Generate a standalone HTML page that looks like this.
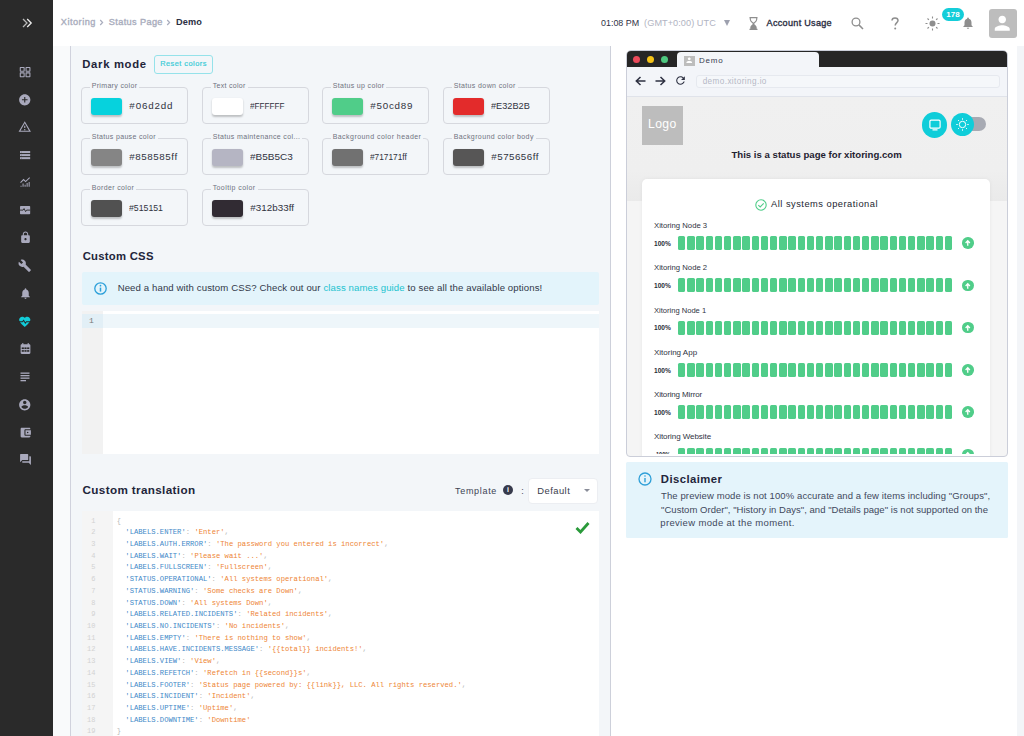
<!DOCTYPE html>
<html><head><meta charset="utf-8">
<style>
*{box-sizing:border-box;margin:0;padding:0}
html,body{width:1024px;height:736px;overflow:hidden;background:#fff;font-family:"Liberation Sans",sans-serif;color:#2b2e42}
.a{position:absolute}
.t{position:absolute;white-space:nowrap}
#sb{left:0;top:0;width:53px;height:736px;background:#2a2a2a}
#lp{left:69.5px;top:46px;width:541.5px;height:690px;background:#f3f6f9;border-left:1.5px solid #d0d2dd;border-right:1px solid #cdd0da}
#lstrip{left:53px;top:46px;width:17px;height:690px;background:#f9fafb}
#rstrip{left:1017px;top:46px;width:8px;height:690px;background:#f3f5f8}
.fld{position:absolute;width:106.5px;height:37.3px;border:1px solid #d6d8de;border-radius:4px}
.fld .sw{position:absolute;left:8.8px;top:9.7px;width:31.2px;height:17.2px;border-radius:3px;box-shadow:0 1.5px 2px rgba(0,0,0,.22)}
#ed2{left:82px;top:511px;width:517px;height:225px;background:#fff}
#gut2{position:absolute;left:0;top:0;width:31px;height:225px;background:#f5f5f5}
#gut2 pre{position:absolute;right:17.5px;top:4.5px;text-align:right;font-family:"Liberation Mono",monospace;font-size:7px;line-height:11.72px;color:#d2d2d2}
#code2{position:absolute;left:34.7px;top:4.5px;font-family:"Liberation Mono",monospace;font-size:7.2px;line-height:11.72px;color:#999}
#code2 .k{color:#4189c8}
#code2 .v{color:#ee8535}
#code2 .p{color:#b9b9b9}
#win{left:625.5px;top:50px;width:382.5px;height:406.5px;border:1px solid #cbced9;border-radius:5px 5px 4px 4px;overflow:hidden;background:#f5f5f5}
#tbar{left:0;top:0;width:100%;height:15.5px;background:#262626}
.dot{position:absolute;top:5.2px;width:7.2px;height:7.2px;border-radius:50%}
#tab{left:50.5px;top:1.3px;width:142px;height:15px;background:#f3f5f9;border-radius:4px 4px 0 0}
#nav{left:0;top:15.5px;width:100%;height:30px;background:#f3f5f9;border-bottom:1px solid #e0e3ea}
#url{left:69px;top:8.3px;width:304px;height:13.5px;border:1px solid #e6e9ef;border-radius:3px;background:#f5f7fa}
#phdr{left:0;top:45.5px;width:100%;height:104px;background:linear-gradient(#f0f0f0 0%,#efefef 70%,#eaeaea 100%)}
#card{left:15.5px;top:128px;width:348px;height:300px;background:#fff;border-radius:5px;box-shadow:0 0 4px rgba(0,0,0,.06)}
#clip{left:0;top:0;width:1024px;height:736px;clip-path:inset(96px 17px 282px 626.5px)}
.bars{position:absolute;width:274px;height:14px}
.bars i{position:absolute;top:0;width:7.4px;height:14px;background:#50cd89;border-radius:1.5px}
.up{position:absolute;width:11.5px;height:11.5px;border-radius:50%;background:#50cd89}
.up svg{position:absolute;left:0;top:0}
#disc{left:625.5px;top:462px;width:382.5px;height:76px;background:#e4f4fb;border-radius:1.5px}
</style></head><body>
<div id="sb" class="a"></div>
<div id="lstrip" class="a"></div>
<div id="lp" class="a"></div>
<div id="rstrip" class="a"></div>
<svg class="a" style="left:21.5px;top:18px" width="11" height="10" viewBox="0 0 11 10"><path d="M1 1 L5 5 L1 9" fill="none" stroke="#b8b8b8" stroke-width="1.3"/><path d="M5.2 1 L9.2 5 L5.2 9" fill="none" stroke="#f0f0f0" stroke-width="1.3"/></svg>
<svg class="a" style="left:18.7px;top:65.5px" width="12.2" height="12.2" viewBox="0 0 24 24"><g fill="none" stroke="#a9a9bc" stroke-width="2.1"><rect x="2.5" y="3" width="7.6" height="7.4" rx="0.4"/><rect x="13.9" y="3" width="7.6" height="7.4" rx="0.4"/><rect x="2.5" y="13.6" width="7.6" height="7.4" rx="0.4"/><rect x="13.9" y="13.6" width="7.6" height="7.4" rx="0.4"/></g></svg>
<svg class="a" style="left:18px;top:92.7px" width="13.5" height="13.5" viewBox="0 0 24 24"><path fill="#a9a9bc" d="M12 2C6.48 2 2 6.48 2 12s4.48 10 10 10 10-4.48 10-10S17.52 2 12 2zm5 11h-4v4h-2v-4H7v-2h4V7h2v4h4v2z"/></svg>
<svg class="a" style="left:18px;top:120.2px" width="13.5" height="13.5" viewBox="0 0 24 24"><path fill="#a9a9bc" d="M12 5.99L19.53 19H4.47L12 5.99M12 2L1 21h22L12 2zm1 14h-2v2h2v-2zm0-6h-2v4h2v-4z"/></svg>
<svg class="a" style="left:18.7px;top:148.6px" width="12.2" height="12.2" viewBox="0 0 24 24"><g fill="#a9a9bc"><rect x="2" y="4" width="20" height="4"/><rect x="2" y="10" width="20" height="4"/><rect x="2" y="16" width="20" height="4"/></g><g fill="#272727"><rect x="4" y="5.5" width="1" height="1"/><rect x="4" y="11.5" width="1" height="1"/><rect x="4" y="17.5" width="1" height="1"/></g></svg>
<svg class="a" style="left:18.7px;top:176.4px" width="12.2" height="12.2" viewBox="0 0 24 24"><g fill="none" stroke="#a9a9bc" stroke-width="2"><path d="M3 13 L9 7 L13 11 L21 3"/><path d="M4 21v-2M8 21v-6M12 21v-4M16 21v-7M20 21v-9"/></g></svg>
<svg class="a" style="left:18.7px;top:204.1px" width="12.2" height="12.2" viewBox="0 0 24 24"><rect x="2" y="4" width="20" height="16" rx="1.5" fill="#a9a9bc"/><path d="M2 12 H8 L10 9 L13 15 L15 12 H22" fill="none" stroke="#272727" stroke-width="1.8"/></svg>
<svg class="a" style="left:18.7px;top:230.8px" width="13" height="13" viewBox="0 0 24 24"><path fill="#a9a9bc" d="M18 8h-1V6c0-2.76-2.24-5-5-5S7 3.240 7 6v2H6c-1.1 0-2 .9-2 2v10c0 1.1.9 2 2 2h12c1.1 0 2-.9 2-2V10c0-1.1-.9-2-2-2zm-6 9c-1.1 0-2-.9-2-2s.9-2 2-2 2 .9 2 2-.9 2-2 2zm3.1-9H8.9V6c0-1.71 1.39-3.1 3.1-3.1 1.71 0 3.1 1.39 3.1 3.1v2z"/></svg>
<svg class="a" style="left:17.8px;top:259.1px" width="13.5" height="13.5" viewBox="0 0 24 24"><path fill="#a9a9bc" d="M22.7 19l-9.1-9.1c.9-2.3.4-5-1.5-6.9-2-2-5-2.4-7.4-1.3L9 6 6 9 1.6 4.7C.4 7.1.9 10.1 2.9 12.1c1.9 1.9 4.600 2.4 6.9 1.5l9.1 9.1c.4.4 1 .4 1.4 0l2.3-2.3c.5-.4.5-1.1.1-1.4z"/></svg>
<svg class="a" style="left:18.7px;top:287.1px" width="13" height="13" viewBox="0 0 24 24"><path fill="#a9a9bc" d="M12 22c1.1 0 2-.9 2-2h-4c0 1.1.89 2 2 2zm6-6v-5c0-3.07-1.64-5.64-4.5-6.32V4c0-.83-.67-1.5-1.5-1.5s-1.5.67-1.5 1.5v.68C7.63 5.36 6 7.92 6 11v5l-2 2v1h16v-1l-2-2z"/></svg>
<svg class="a" style="left:18px;top:314.6px" width="13.5" height="13.5" viewBox="0 0 24 24"><path fill="#12ccd8" d="M12 21.35l-1.45-1.32C5.4 15.36 2 12.28 2 8.5 2 5.42 4.42 3 7.5 3c1.74 0 3.41.81 4.5 2.09C13.09 3.81 14.76 3 16.5 3 19.58 3 22 5.420 22 8.5c0 3.78-3.4 6.86-8.55 11.54L12 21.35z"/><path d="M1 12 H8 L10 9.5 L13 14.5 L15 12 H23" fill="none" stroke="#272727" stroke-width="1.8"/></svg>
<svg class="a" style="left:18.7px;top:342.2px" width="13" height="13" viewBox="0 0 24 24"><path fill="#a9a9bc" d="M19 4h-1V2h-2v2H8V2H6v2H5c-1.1 0-2 .9-2 2v14c0 1.1.9 2 2 2h14c1.1 0 2-.9 2-2V6c0-1.1-.9-2-2-2z"/><g fill="#272727"><rect x="5" y="10" width="4" height="3"/><rect x="10" y="10" width="4" height="3"/><rect x="15" y="10" width="4" height="3"/><rect x="5" y="15" width="4" height="3"/><rect x="10" y="15" width="4" height="3"/><rect x="15" y="15" width="4" height="3"/></g></svg>
<svg class="a" style="left:18.7px;top:370.5px" width="12" height="12" viewBox="0 0 24 24"><g fill="#a9a9bc"><rect x="3" y="3" width="18" height="2.6"/><rect x="3" y="8" width="18" height="2.6"/><rect x="3" y="13" width="18" height="2.6"/><rect x="3" y="18" width="11" height="2.6"/></g></svg>
<svg class="a" style="left:18px;top:397.6px" width="13.5" height="13.5" viewBox="0 0 24 24"><path fill="#a9a9bc" d="M12 2C6.48 2 2 6.48 2 12s4.48 10 10 10 10-4.48 10-10S17.52 2 12 2zm0 3c1.66 0 3 1.34 3 3s-1.34 3-3 3-3-1.34-3-3 1.34-3 3-3zm0 14.2c-2.5 0-4.71-1.28-6-3.22.03-1.99 4-3.08 6-3.08 1.99 0 5.970 1.09 6 3.08-1.29 1.94-3.5 3.22-6 3.22z"/></svg>
<svg class="a" style="left:18.7px;top:425.5px" width="13" height="13" viewBox="0 0 24 24"><path fill="#a9a9bc" d="M21 18v1c0 1.1-.9 2-2 2H5c-1.11 0-2-.9-2-2V5c0-1.1.89-2 2-2h14c1.1 0 2 .9 2 2v1h-9c-1.11 0-2 .9-2 2v8c0 1.1.89 2 2 2h9zm-9-2h10V8H12v8zm4-2.5c-.83 0-1.5-.67-1.5-1.5s.67-1.5 1.5-1.5 1.5.67 1.5 1.5-.67 1.5-1.5 1.5z"/></svg>
<svg class="a" style="left:18.7px;top:453.0px" width="13" height="13" viewBox="0 0 24 24"><path fill="#a9a9bc" d="M21 6h-2v9H6v2c0 .55.45 1 1 1h11l4 4V7c0-.55-.45-1-1-1zm-4 6V3c0-.55-.45-1-1-1H3c-.55 0-1 .45-1 1v14l4-4h10c.55 0 1-.45 1-1z"/></svg>
<!-- header -->
<div id="bc1" class="t" style="left:60.82px;top:15.41px;font-size:9.2px;line-height:14px;color:#a9adbd;-webkit-text-stroke:0.35px #a9adbd;letter-spacing:0.486px;"><span>Xitoring</span></div>
<svg class="a" style="left:99px;top:19px" width="5" height="7" viewBox="0 0 5 7"><path d="M1.2 1 L3.6 3.5 L1.2 6" fill="none" stroke="#a9adbd" stroke-width="1.2"/></svg>
<div id="bc2" class="t" style="left:108.82px;top:15.41px;font-size:9.2px;line-height:14px;color:#a9adbd;-webkit-text-stroke:0.35px #a9adbd;letter-spacing:0.360px;"><span>Status Page</span></div>
<svg class="a" style="left:166.3px;top:19px" width="5" height="7" viewBox="0 0 5 7"><path d="M1.2 1 L3.6 3.5 L1.2 6" fill="none" stroke="#a9adbd" stroke-width="1.2"/></svg>
<div id="bc3" class="t" style="left:176.08px;top:15.41px;font-size:9.2px;line-height:14px;color:#2c2f43;font-weight:bold;letter-spacing:0.100px;"><span>Demo</span></div>
<div id="tm1" class="t" style="left:601.46px;top:15.91px;font-size:9.2px;line-height:14px;color:#2f3246;transform:scaleX(0.9698);transform-origin:0 0;"><span>01:08 PM</span></div><div id="tm2" class="t" style="left:644.10px;top:15.91px;font-size:9.2px;line-height:14px;color:#b1b4c2;letter-spacing:0.038px;"><span>(GMT+0:00) UTC</span></div>
<div class="a" style="left:724px;top:20px;width:0;height:0;border-left:3.6px solid transparent;border-right:3.6px solid transparent;border-top:6px solid #9da0ae"></div>
<svg class="a" style="left:749px;top:16.5px" width="9" height="13" viewBox="0 0 9 13"><path d="M0.5 0.7 H8.5 M0.5 12.3 H8.5" stroke="#8e8e8e" stroke-width="1.3"/><path d="M1.3 1 V2.5 C1.3 4.5 3.5 5.5 4.5 6.5 C5.5 5.5 7.7 4.5 7.7 2.5 V1" fill="none" stroke="#8e8e8e" stroke-width="1.1"/><path d="M1.3 12 V10.5 C1.3 8.5 3.5 7.5 4.5 6.5 C5.5 7.5 7.7 8.5 7.7 10.5 V12 Z" fill="#8e8e8e"/></svg>
<div id="acc" class="t" style="left:766.62px;top:15.65px;font-size:9.1px;line-height:14px;color:#2b2e42;-webkit-text-stroke:0.35px #2b2e42;letter-spacing:0.283px;"><span>Account Usage</span></div>
<svg class="a" style="left:850.5px;top:17px" width="13" height="13" viewBox="0 0 13 13"><circle cx="5" cy="5" r="3.9" fill="none" stroke="#8e8e8e" stroke-width="1.3"/><path d="M7.9 7.9 L12 12" stroke="#8e8e8e" stroke-width="1.5"/></svg>
<svg class="a" style="left:891px;top:17px" width="8" height="13" viewBox="0 0 8 13"><path d="M1 3.6 C1 1.9 2.3 0.9 4 0.9 C5.8 0.9 7 2 7 3.6 C7 5.6 4.2 5.8 4.2 8.6" fill="none" stroke="#8e8e8e" stroke-width="1.5"/><circle cx="4.2" cy="11.6" r="1" fill="#8e8e8e"/></svg>
<svg class="a" style="left:924.5px;top:15.5px" width="15" height="15" viewBox="0 0 15 15"><circle cx="7.5" cy="7.5" r="3" fill="#8e8e8e"/><g stroke="#8e8e8e" stroke-width="1.1"><path d="M7.5 0.5v2M7.5 12.5v2M0.5 7.5h2M12.5 7.5h2M2.5 2.5l1.4 1.4M11.1 11.1l1.4 1.4M2.5 12.5l1.4-1.4M11.1 3.9l1.4-1.4"/></g></svg>
<svg class="a" style="left:960.5px;top:16px" width="14" height="14" viewBox="0 0 24 24"><path fill="#8e8e8e" d="M12 22c1.1 0 2-.9 2-2h-4c0 1.1.89 2 2 2zm6-6v-5c0-3.07-1.64-5.64-4.5-6.32V4c0-.83-.67-1.5-1.5-1.5s-1.5.67-1.5 1.5v.68C7.63 5.36 6 7.92 6 11v5l-2 2v1h16v-1l-2-2z"/></svg>
<div class="a" style="left:942px;top:8px;width:22px;height:13px;border-radius:7px;background:#14cdd9;color:#fff;font-size:8px;line-height:13px;text-align:center;font-weight:bold">178</div>
<div class="a" style="left:988.5px;top:9px;width:28.5px;height:28.7px;border-radius:3px;background:#bdbdbd"></div>
<svg class="a" style="left:990.9px;top:12.3px" width="22.5" height="22.5" viewBox="0 0 24 24"><path fill="#fff" d="M12 12c2.21 0 4-1.79 4-4s-1.79-4-4-4-4 1.79-4 4 1.79 4 4 4zm0 2c-2.67 0-8 1.34-8 4v2h16v-2c0-2.66-5.33-4-8-4z"/></svg>

<!-- left panel -->
<div id="dm" class="t" style="left:82.28px;top:57.18px;font-size:11.3px;line-height:14px;color:#22253a;font-weight:bold;letter-spacing:0.675px;"><span>Dark mode</span></div>
<div class="a" style="left:153.6px;top:55px;width:59.6px;height:18.5px;border:1px solid #95e2ea;border-radius:3px"></div>
<div id="rc" class="t" style="left:160.28px;top:57.04px;font-size:7.4px;line-height:14px;color:#38cbd6;-webkit-text-stroke:0.2px #38cbd6;letter-spacing:0.455px;"><span>Reset colors</span></div>
<div class="fld" style="left:81.4px;top:87px"><div class="sw" style="background:#06d2dd"></div></div>
<div class="fld" style="left:202.4px;top:87px"><div class="sw" style="background:#ffffff"></div></div>
<div class="fld" style="left:322.4px;top:87px"><div class="sw" style="background:#50cd89"></div></div>
<div class="fld" style="left:443.4px;top:87px"><div class="sw" style="background:#e32b2b"></div></div>
<div class="fld" style="left:81.4px;top:138px"><div class="sw" style="background:#858585"></div></div>
<div class="fld" style="left:202.4px;top:138px"><div class="sw" style="background:#b5b5c3"></div></div>
<div class="fld" style="left:322.4px;top:138px"><div class="sw" style="background:#717171"></div></div>
<div class="fld" style="left:443.4px;top:138px"><div class="sw" style="background:#575656"></div></div>
<div class="fld" style="left:81.4px;top:189px"><div class="sw" style="background:#515151"></div></div>
<div class="fld" style="left:202.4px;top:189px"><div class="sw" style="background:#312b33"></div></div>
<div id="fl0" class="t" style="left:91.64px;top:78.77px;font-size:7.0px;line-height:14px;color:#6f7280;letter-spacing:0.342px;background:#f3f6f9;padding:0 2px;margin-left:-2px;"><span>Primary color</span></div>
<div id="fh0" class="t" style="left:129.36px;top:99.00px;font-size:9.8px;line-height:14px;color:#30333e;letter-spacing:0.833px;"><span>#06d2dd</span></div>
<div id="fl1" class="t" style="left:212.64px;top:78.77px;font-size:7.0px;line-height:14px;color:#6f7280;letter-spacing:0.311px;background:#f3f6f9;padding:0 2px;margin-left:-2px;"><span>Text color</span></div>
<div id="fh1" class="t" style="left:250.36px;top:99.00px;font-size:9.8px;line-height:14px;color:#30333e;transform:scaleX(0.8333);transform-origin:0 0;"><span>#FFFFFF</span></div>
<div id="fl2" class="t" style="left:332.64px;top:78.77px;font-size:7.0px;line-height:14px;color:#6f7280;letter-spacing:0.343px;background:#f3f6f9;padding:0 2px;margin-left:-2px;"><span>Status up color</span></div>
<div id="fh2" class="t" style="left:370.36px;top:99.00px;font-size:9.8px;line-height:14px;color:#30333e;letter-spacing:0.750px;"><span>#50cd89</span></div>
<div id="fl3" class="t" style="left:453.64px;top:78.77px;font-size:7.0px;line-height:14px;color:#6f7280;letter-spacing:0.381px;background:#f3f6f9;padding:0 2px;margin-left:-2px;"><span>Status down color</span></div>
<div id="fh3" class="t" style="left:491.36px;top:99.00px;font-size:9.8px;line-height:14px;color:#30333e;transform:scaleX(0.9388);transform-origin:0 0;"><span>#E32B2B</span></div>
<div id="fl4" class="t" style="left:91.64px;top:129.77px;font-size:7.0px;line-height:14px;color:#6f7280;letter-spacing:0.353px;background:#f3f6f9;padding:0 2px;margin-left:-2px;"><span>Status pause color</span></div>
<div id="fh4" class="t" style="left:129.36px;top:150.00px;font-size:9.8px;line-height:14px;color:#30333e;letter-spacing:0.550px;"><span>#858585ff</span></div>
<div id="fl5" class="t" style="left:212.64px;top:129.77px;font-size:7.0px;line-height:14px;color:#6f7280;letter-spacing:0.363px;background:#f3f6f9;padding:0 2px;margin-left:-2px;"><span>Status maintenance col...</span></div>
<div id="fh5" class="t" style="left:250.36px;top:150.00px;font-size:9.8px;line-height:14px;color:#30333e;transform:scaleX(1.0201);transform-origin:0 0;"><span>#B5B5C3</span></div>
<div id="fl6" class="t" style="left:332.64px;top:129.77px;font-size:7.0px;line-height:14px;color:#6f7280;letter-spacing:0.459px;background:#f3f6f9;padding:0 2px;margin-left:-2px;"><span>Background color header</span></div>
<div id="fh6" class="t" style="left:370.36px;top:150.00px;font-size:9.8px;line-height:14px;color:#30333e;transform:scaleX(0.8484);transform-origin:0 0;"><span>#717171ff</span></div>
<div id="fl7" class="t" style="left:453.64px;top:129.77px;font-size:7.0px;line-height:14px;color:#6f7280;letter-spacing:0.410px;background:#f3f6f9;padding:0 2px;margin-left:-2px;"><span>Background color body</span></div>
<div id="fh7" class="t" style="left:491.36px;top:150.00px;font-size:9.8px;line-height:14px;color:#30333e;letter-spacing:0.450px;"><span>#575656ff</span></div>
<div id="fl8" class="t" style="left:91.64px;top:180.77px;font-size:7.0px;line-height:14px;color:#6f7280;letter-spacing:0.373px;background:#f3f6f9;padding:0 2px;margin-left:-2px;"><span>Border color</span></div>
<div id="fh8" class="t" style="left:129.36px;top:201.00px;font-size:9.8px;line-height:14px;color:#30333e;transform:scaleX(0.8901);transform-origin:0 0;"><span>#515151</span></div>
<div id="fl9" class="t" style="left:212.64px;top:180.77px;font-size:7.0px;line-height:14px;color:#6f7280;letter-spacing:0.425px;background:#f3f6f9;padding:0 2px;margin-left:-2px;"><span>Tooltip color</span></div>
<div id="fh9" class="t" style="left:250.36px;top:201.00px;font-size:9.8px;line-height:14px;color:#30333e;letter-spacing:0.037px;"><span>#312b33ff</span></div>
<div id="ccss" class="t" style="left:82.67px;top:248.68px;font-size:11.3px;line-height:14px;color:#22253a;font-weight:bold;letter-spacing:0.261px;"><span>Custom CSS</span></div>
<div class="a" style="left:82px;top:272px;width:517px;height:33px;background:#e3f4fb;border-radius:2px"></div>
<svg class="a" style="left:94.3px;top:282px" width="13" height="13" viewBox="0 0 13 13"><circle cx="6.5" cy="6.5" r="5.7" fill="none" stroke="#2b9fd9" stroke-width="1.3"/><path d="M6.5 5.6v4" stroke="#2b9fd9" stroke-width="1.5"/><circle cx="6.5" cy="3.7" r="0.85" fill="#2b9fd9"/></svg>
<div id="info" class="t" style="left:117.64px;top:280.77px;font-size:9.6px;line-height:14px;color:#323849;letter-spacing:0.110px;"><span>Need a hand with custom CSS? Check out our <span style="color:#22c3cf">class names guide</span> to see all the available options!</span></div>
<div class="a" style="left:82px;top:311px;width:517px;height:143px;background:#fff"></div>
<div class="a" style="left:82px;top:311px;width:21px;height:143px;background:#f2f2f2"></div>
<div class="a" style="left:82px;top:314px;width:517px;height:14px;background:#eef6fa"></div>
<div class="a" style="left:82px;top:314px;width:21px;height:14px;background:#e2eff6"></div>
<div class="t" style="left:89px;top:315px;font-size:8px;line-height:12px;color:#777;font-family:'Liberation Mono',monospace">1</div>
<div id="ctr" class="t" style="left:82.54px;top:483.20px;font-size:11.7px;line-height:14px;color:#22253a;font-weight:bold;letter-spacing:0.353px;"><span>Custom translation</span></div>
<div id="tpl" class="t" style="left:455.00px;top:484.18px;font-size:9.0px;line-height:14px;color:#404354;letter-spacing:0.686px;"><span>Template</span></div>
<div class="a" style="left:503px;top:485px;width:10px;height:10px;border-radius:50%;background:#373a4c;color:#fff;font-size:7px;line-height:10px;text-align:center;font-weight:bold">i</div>
<div id="colon" class="t" style="left:521.36px;top:484.18px;font-size:9.0px;line-height:14px;color:#404354;"><span>:</span></div>
<div class="a" style="left:528px;top:477.5px;width:70px;height:26px;background:#fff;border-radius:4px;border:1px solid #eceef2"></div>
<div id="dflt" class="t" style="left:537.28px;top:484.04px;font-size:9.4px;line-height:14px;color:#3a3d4d;letter-spacing:0.467px;"><span>Default</span></div>
<div class="a" style="left:584px;top:489px;width:0;height:0;border-left:3px solid transparent;border-right:3px solid transparent;border-top:3.5px solid #8a8d99"></div>
<div class="a" id="ed2"><div id="gut2"><pre>1
2
3
4
5
6
7
8
9
10
11
12
13
14
15
16
17
18
19</pre></div><pre id="code2"><span class="p">{</span>
  <span class="k">'LABELS.ENTER'</span><span class="p">:</span> <span class="v">'Enter'</span><span class="p">,</span>
  <span class="k">'LABELS.AUTH.ERROR'</span><span class="p">:</span> <span class="v">'The password you entered is incorrect'</span><span class="p">,</span>
  <span class="k">'LABELS.WAIT'</span><span class="p">:</span> <span class="v">'Please wait ...'</span><span class="p">,</span>
  <span class="k">'LABELS.FULLSCREEN'</span><span class="p">:</span> <span class="v">'Fullscreen'</span><span class="p">,</span>
  <span class="k">'STATUS.OPERATIONAL'</span><span class="p">:</span> <span class="v">'All systems operational'</span><span class="p">,</span>
  <span class="k">'STATUS.WARNING'</span><span class="p">:</span> <span class="v">'Some checks are Down'</span><span class="p">,</span>
  <span class="k">'STATUS.DOWN'</span><span class="p">:</span> <span class="v">'All systems Down'</span><span class="p">,</span>
  <span class="k">'LABELS.RELATED.INCIDENTS'</span><span class="p">:</span> <span class="v">'Related incidents'</span><span class="p">,</span>
  <span class="k">'LABELS.NO.INCIDENTS'</span><span class="p">:</span> <span class="v">'No incidents'</span><span class="p">,</span>
  <span class="k">'LABELS.EMPTY'</span><span class="p">:</span> <span class="v">'There is nothing to show'</span><span class="p">,</span>
  <span class="k">'LABELS.HAVE.INCIDENTS.MESSAGE'</span><span class="p">:</span> <span class="v">'{{total}} incidents!'</span><span class="p">,</span>
  <span class="k">'LABELS.VIEW'</span><span class="p">:</span> <span class="v">'View'</span><span class="p">,</span>
  <span class="k">'LABELS.REFETCH'</span><span class="p">:</span> <span class="v">'Refetch in {{second}}s'</span><span class="p">,</span>
  <span class="k">'LABELS.FOOTER'</span><span class="p">:</span> <span class="v">'Status page powered by: {{link}}, LLC. All rights reserved.'</span><span class="p">,</span>
  <span class="k">'LABELS.INCIDENT'</span><span class="p">:</span> <span class="v">'Incident'</span><span class="p">,</span>
  <span class="k">'LABELS.UPTIME'</span><span class="p">:</span> <span class="v">'Uptime'</span><span class="p">,</span>
  <span class="k">'LABELS.DOWNTIME'</span><span class="p">:</span> <span class="v">'Downtime'</span>
<span class="p">}</span></pre></div>
<svg class="a" style="left:575px;top:521px" width="15" height="13" viewBox="0 0 15 13"><path d="M1.5 7 L5.5 11 L13.5 2" fill="none" stroke="#2a9a3a" stroke-width="2.8"/></svg>

<!-- preview window -->
<div id="win" class="a">
 <div id="tbar" class="a"></div>
 <div class="dot" style="left:6.8px;background:#ec4a5b"></div>
 <div class="dot" style="left:20.2px;background:#f5c317"></div>
 <div class="dot" style="left:34.5px;background:#4ec880"></div>
 <div id="tab" class="a"></div>
 <div class="a" style="left:57.8px;top:4.5px;width:10.5px;height:10.3px;background:#bdbdbd"></div>
 <svg class="a" style="left:58.8px;top:5.4px" width="8.5" height="8.5" viewBox="0 0 24 24"><path fill="#fff" d="M12 12c2.21 0 4-1.79 4-4s-1.790-4-4-4-4 1.79-4 4 1.79 4 4 4zm0 2c-2.67 0-8 1.34-8 4v2h16v-2c0-2.66-5.33-4-8-4z"/></svg>
 <div id="nav" class="a">
  <svg class="a" style="left:8.2px;top:9.3px" width="11" height="10" viewBox="0 0 11 10"><path d="M10.5 5H1.5M5.5 1L1.3 5 5.5 9" fill="none" stroke="#2e3142" stroke-width="1.5"/></svg>
  <svg class="a" style="left:28.2px;top:9.3px" width="11" height="10" viewBox="0 0 11 10"><path d="M0.5 5H9.5M5.5 1L9.7 5 5.5 9" fill="none" stroke="#2e3142" stroke-width="1.5"/></svg>
  <svg class="a" style="left:47.5px;top:7.8px" width="13" height="13" viewBox="0 0 24 24"><path fill="#2e3142" d="M17.65 6.35C16.2 4.9 14.21 4 12 4c-4.42 0-7.99 3.58-7.99 8s3.57 8 7.990 8c3.73 0 6.84-2.55 7.73-6h-2.08c-.82 2.33-3.04 4-5.65 4-3.31 0-6-2.69-6-6s2.69-6 6-6c1.66 0 3.14.69 4.22 1.78L13 11h7V4l-2.35 2.35z"/></svg>
  <div id="url" class="a"></div>
 </div>
 <div id="phdr" class="a"></div>
 <div class="a" style="left:15.6px;top:54.5px;width:41px;height:39px;background:#bdbdbd"></div>
 <div class="a" style="left:295.3px;top:61.4px;width:25.2px;height:25.2px;border-radius:50%;background:#0fcdd9"></div>
 <svg class="a" style="left:302px;top:67.5px" width="12" height="12" viewBox="0 0 12 12"><rect x="0.9" y="1.2" width="10.2" height="8" rx="1.2" fill="none" stroke="#fff" stroke-width="1.2"/><path d="M3.5 10.8h5" stroke="#fff" stroke-width="1.2"/></svg>
 <div class="a" style="left:333px;top:66px;width:26px;height:14.4px;border-radius:7.2px;background:#a7aab3"></div>
 <div class="a" style="left:324.8px;top:61.7px;width:23.2px;height:23.2px;border-radius:50%;background:#0fcdd9"></div>
 <svg class="a" style="left:329.9px;top:66.8px" width="13" height="13" viewBox="0 0 13 13"><circle cx="6.5" cy="6.5" r="3.2" fill="none" stroke="#fff" stroke-width="1"/><g stroke="#fff" stroke-width="1"><path d="M6.5 0.3v1.4M6.5 11.3v1.4M0.3 6.5h1.4M11.3 6.5h1.4M2.1 2.1l1 1M9.9 9.9l1 1M2.1 10.9l1-1M9.9 3.1l1-1"/></g></svg>
 <div id="card" class="a"></div>
 <svg class="a" style="left:128.5px;top:147.5px" width="12" height="12" viewBox="0 0 12 12"><circle cx="6" cy="6" r="5.2" fill="none" stroke="#50cd89" stroke-width="1.1"/><path d="M3.3 6.2L5.2 8 8.7 4.3" fill="none" stroke="#50cd89" stroke-width="1.1"/></svg>
</div>
<div id="tabd" class="t" style="left:698.92px;top:54.23px;font-size:8.0px;line-height:14px;color:#393c4f;letter-spacing:0.800px;"><span>Demo</span></div><div id="urlt" class="t" style="left:702.64px;top:74.66px;font-size:8.2px;line-height:14px;color:#b6b9c6;letter-spacing:0.400px;"><span>demo.xitoring.io</span></div><div id="logo" class="t" style="left:648.02px;top:116.67px;font-size:12.2px;line-height:14px;color:#ffffff;letter-spacing:0.367px;"><span>Logo</span></div><div id="ttl" class="t" style="left:731.44px;top:148.27px;font-size:9.6px;line-height:14px;color:#1f2230;font-weight:bold;letter-spacing:0.005px;"><span>This is a status page for xitoring.com</span></div><div id="aso" class="t" style="left:771.00px;top:196.68px;font-size:9.3px;line-height:14px;color:#22252f;letter-spacing:0.495px;"><span>All systems operational</span></div>
<div id="clip" class="a">
<div id="rn0" class="t" style="left:653.95px;top:218.98px;font-size:8.0px;line-height:14px;color:#30333f;transform:scaleX(0.9635);transform-origin:0 0;"><span>Xitoring Node 3</span></div>
<div id="rp0" class="t" style="left:653.95px;top:236.62px;font-size:7.6px;line-height:14px;color:#2a2d3a;font-weight:bold;transform:scaleX(0.8680);transform-origin:0 0;"><span>100%</span></div>
<div class="bars" style="left:678px;top:236.0px"><i style="left:0.0px"></i><i style="left:9.2px"></i><i style="left:18.4px"></i><i style="left:27.6px"></i><i style="left:36.8px"></i><i style="left:46.0px"></i><i style="left:55.2px"></i><i style="left:64.4px"></i><i style="left:73.6px"></i><i style="left:82.8px"></i><i style="left:92.0px"></i><i style="left:101.2px"></i><i style="left:110.4px"></i><i style="left:119.6px"></i><i style="left:128.8px"></i><i style="left:138.0px"></i><i style="left:147.2px"></i><i style="left:156.4px"></i><i style="left:165.6px"></i><i style="left:174.8px"></i><i style="left:184.0px"></i><i style="left:193.2px"></i><i style="left:202.4px"></i><i style="left:211.6px"></i><i style="left:220.8px"></i><i style="left:230.0px"></i><i style="left:239.2px"></i><i style="left:248.4px"></i><i style="left:257.6px"></i><i style="left:266.8px"></i></div>
<div class="up" style="left:962px;top:237.2px"><svg width="11.5" height="11.5" viewBox="0 0 12 12"><path d="M6 9V4.2M3.8 6.2L6 3.8 8.2 6.2" fill="none" stroke="#fff" stroke-width="1.4"/></svg></div>
<div id="rn1" class="t" style="left:653.95px;top:261.28px;font-size:8.0px;line-height:14px;color:#30333f;transform:scaleX(0.9635);transform-origin:0 0;"><span>Xitoring Node 2</span></div>
<div id="rp1" class="t" style="left:653.95px;top:278.92px;font-size:7.6px;line-height:14px;color:#2a2d3a;font-weight:bold;transform:scaleX(0.8680);transform-origin:0 0;"><span>100%</span></div>
<div class="bars" style="left:678px;top:278.3px"><i style="left:0.0px"></i><i style="left:9.2px"></i><i style="left:18.4px"></i><i style="left:27.6px"></i><i style="left:36.8px"></i><i style="left:46.0px"></i><i style="left:55.2px"></i><i style="left:64.4px"></i><i style="left:73.6px"></i><i style="left:82.8px"></i><i style="left:92.0px"></i><i style="left:101.2px"></i><i style="left:110.4px"></i><i style="left:119.6px"></i><i style="left:128.8px"></i><i style="left:138.0px"></i><i style="left:147.2px"></i><i style="left:156.4px"></i><i style="left:165.6px"></i><i style="left:174.8px"></i><i style="left:184.0px"></i><i style="left:193.2px"></i><i style="left:202.4px"></i><i style="left:211.6px"></i><i style="left:220.8px"></i><i style="left:230.0px"></i><i style="left:239.2px"></i><i style="left:248.4px"></i><i style="left:257.6px"></i><i style="left:266.8px"></i></div>
<div class="up" style="left:962px;top:279.5px"><svg width="11.5" height="11.5" viewBox="0 0 12 12"><path d="M6 9V4.2M3.8 6.2L6 3.8 8.2 6.2" fill="none" stroke="#fff" stroke-width="1.4"/></svg></div>
<div id="rn2" class="t" style="left:653.95px;top:303.58px;font-size:8.0px;line-height:14px;color:#30333f;transform:scaleX(0.9455);transform-origin:0 0;"><span>Xitoring Node 1</span></div>
<div id="rp2" class="t" style="left:653.95px;top:321.22px;font-size:7.6px;line-height:14px;color:#2a2d3a;font-weight:bold;transform:scaleX(0.8680);transform-origin:0 0;"><span>100%</span></div>
<div class="bars" style="left:678px;top:320.6px"><i style="left:0.0px"></i><i style="left:9.2px"></i><i style="left:18.4px"></i><i style="left:27.6px"></i><i style="left:36.8px"></i><i style="left:46.0px"></i><i style="left:55.2px"></i><i style="left:64.4px"></i><i style="left:73.6px"></i><i style="left:82.8px"></i><i style="left:92.0px"></i><i style="left:101.2px"></i><i style="left:110.4px"></i><i style="left:119.6px"></i><i style="left:128.8px"></i><i style="left:138.0px"></i><i style="left:147.2px"></i><i style="left:156.4px"></i><i style="left:165.6px"></i><i style="left:174.8px"></i><i style="left:184.0px"></i><i style="left:193.2px"></i><i style="left:202.4px"></i><i style="left:211.6px"></i><i style="left:220.8px"></i><i style="left:230.0px"></i><i style="left:239.2px"></i><i style="left:248.4px"></i><i style="left:257.6px"></i><i style="left:266.8px"></i></div>
<div class="up" style="left:962px;top:321.8px"><svg width="11.5" height="11.5" viewBox="0 0 12 12"><path d="M6 9V4.2M3.8 6.2L6 3.8 8.2 6.2" fill="none" stroke="#fff" stroke-width="1.4"/></svg></div>
<div id="rn3" class="t" style="left:653.95px;top:345.88px;font-size:8.0px;line-height:14px;color:#30333f;"><span>Xitoring App</span></div>
<div id="rp3" class="t" style="left:653.95px;top:363.52px;font-size:7.6px;line-height:14px;color:#2a2d3a;font-weight:bold;transform:scaleX(0.8680);transform-origin:0 0;"><span>100%</span></div>
<div class="bars" style="left:678px;top:362.9px"><i style="left:0.0px"></i><i style="left:9.2px"></i><i style="left:18.4px"></i><i style="left:27.6px"></i><i style="left:36.8px"></i><i style="left:46.0px"></i><i style="left:55.2px"></i><i style="left:64.4px"></i><i style="left:73.6px"></i><i style="left:82.8px"></i><i style="left:92.0px"></i><i style="left:101.2px"></i><i style="left:110.4px"></i><i style="left:119.6px"></i><i style="left:128.8px"></i><i style="left:138.0px"></i><i style="left:147.2px"></i><i style="left:156.4px"></i><i style="left:165.6px"></i><i style="left:174.8px"></i><i style="left:184.0px"></i><i style="left:193.2px"></i><i style="left:202.4px"></i><i style="left:211.6px"></i><i style="left:220.8px"></i><i style="left:230.0px"></i><i style="left:239.2px"></i><i style="left:248.4px"></i><i style="left:257.6px"></i><i style="left:266.8px"></i></div>
<div class="up" style="left:962px;top:364.1px"><svg width="11.5" height="11.5" viewBox="0 0 12 12"><path d="M6 9V4.2M3.8 6.2L6 3.8 8.2 6.2" fill="none" stroke="#fff" stroke-width="1.4"/></svg></div>
<div id="rn4" class="t" style="left:653.95px;top:388.18px;font-size:8.0px;line-height:14px;color:#30333f;letter-spacing:-0.143px;"><span>Xitoring Mirror</span></div>
<div id="rp4" class="t" style="left:653.95px;top:405.82px;font-size:7.6px;line-height:14px;color:#2a2d3a;font-weight:bold;transform:scaleX(0.8680);transform-origin:0 0;"><span>100%</span></div>
<div class="bars" style="left:678px;top:405.2px"><i style="left:0.0px"></i><i style="left:9.2px"></i><i style="left:18.4px"></i><i style="left:27.6px"></i><i style="left:36.8px"></i><i style="left:46.0px"></i><i style="left:55.2px"></i><i style="left:64.4px"></i><i style="left:73.6px"></i><i style="left:82.8px"></i><i style="left:92.0px"></i><i style="left:101.2px"></i><i style="left:110.4px"></i><i style="left:119.6px"></i><i style="left:128.8px"></i><i style="left:138.0px"></i><i style="left:147.2px"></i><i style="left:156.4px"></i><i style="left:165.6px"></i><i style="left:174.8px"></i><i style="left:184.0px"></i><i style="left:193.2px"></i><i style="left:202.4px"></i><i style="left:211.6px"></i><i style="left:220.8px"></i><i style="left:230.0px"></i><i style="left:239.2px"></i><i style="left:248.4px"></i><i style="left:257.6px"></i><i style="left:266.8px"></i></div>
<div class="up" style="left:962px;top:406.4px"><svg width="11.5" height="11.5" viewBox="0 0 12 12"><path d="M6 9V4.2M3.8 6.2L6 3.8 8.2 6.2" fill="none" stroke="#fff" stroke-width="1.4"/></svg></div>
<div id="rn5" class="t" style="left:653.95px;top:430.48px;font-size:8.0px;line-height:14px;color:#30333f;letter-spacing:-0.060px;"><span>Xitoring Website</span></div>
<div id="rp5" class="t" style="left:655.55px;top:448.12px;font-size:7.6px;line-height:14px;color:#2a2d3a;font-weight:bold;transform:scaleX(0.7378);transform-origin:0 0;"><span>100%</span></div>
<div class="bars" style="left:678px;top:447.5px"><i style="left:0.0px"></i><i style="left:9.2px"></i><i style="left:18.4px"></i><i style="left:27.6px"></i><i style="left:36.8px"></i><i style="left:46.0px"></i><i style="left:55.2px"></i><i style="left:64.4px"></i><i style="left:73.6px"></i><i style="left:82.8px"></i><i style="left:92.0px"></i><i style="left:101.2px"></i><i style="left:110.4px"></i><i style="left:119.6px"></i><i style="left:128.8px"></i><i style="left:138.0px"></i><i style="left:147.2px"></i><i style="left:156.4px"></i><i style="left:165.6px"></i><i style="left:174.8px"></i><i style="left:184.0px"></i><i style="left:193.2px"></i><i style="left:202.4px"></i><i style="left:211.6px"></i><i style="left:220.8px"></i><i style="left:230.0px"></i><i style="left:239.2px"></i><i style="left:248.4px"></i><i style="left:257.6px"></i><i style="left:266.8px"></i></div>
<div class="up" style="left:962px;top:448.7px"><svg width="11.5" height="11.5" viewBox="0 0 12 12"><path d="M6 9V4.2M3.8 6.2L6 3.8 8.2 6.2" fill="none" stroke="#fff" stroke-width="1.4"/></svg></div>
</div>
<div id="disc" class="a"></div>
<svg class="a" style="left:637.5px;top:472px" width="14" height="14" viewBox="0 0 14 14"><circle cx="7" cy="7" r="6" fill="none" stroke="#2e9fd8" stroke-width="1.3"/><path d="M7 6v4.2" stroke="#2e9fd8" stroke-width="1.4"/><circle cx="7" cy="4" r="0.8" fill="#2e9fd8"/></svg>
<div id="dsc" class="t" style="left:660.82px;top:471.88px;font-size:11.3px;line-height:14px;color:#22253a;font-weight:bold;letter-spacing:0.433px;"><span>Disclaimer</span></div><div id="dl1" class="t" style="left:661.08px;top:489.31px;font-size:9.5px;line-height:14px;color:#3f485c;letter-spacing:0.099px;"><span>The preview mode is not 100% accurate and a few items including "Groups",</span></div><div id="dl2" class="t" style="left:661.08px;top:502.61px;font-size:9.5px;line-height:14px;color:#3f485c;letter-spacing:0.026px;"><span>"Custom Order", "History in Days", and "Details page" is not supported on the</span></div><div id="dl3" class="t" style="left:660.28px;top:515.91px;font-size:9.5px;line-height:14px;color:#3f485c;letter-spacing:0.342px;"><span>preview mode at the moment.</span></div>
</body></html>
